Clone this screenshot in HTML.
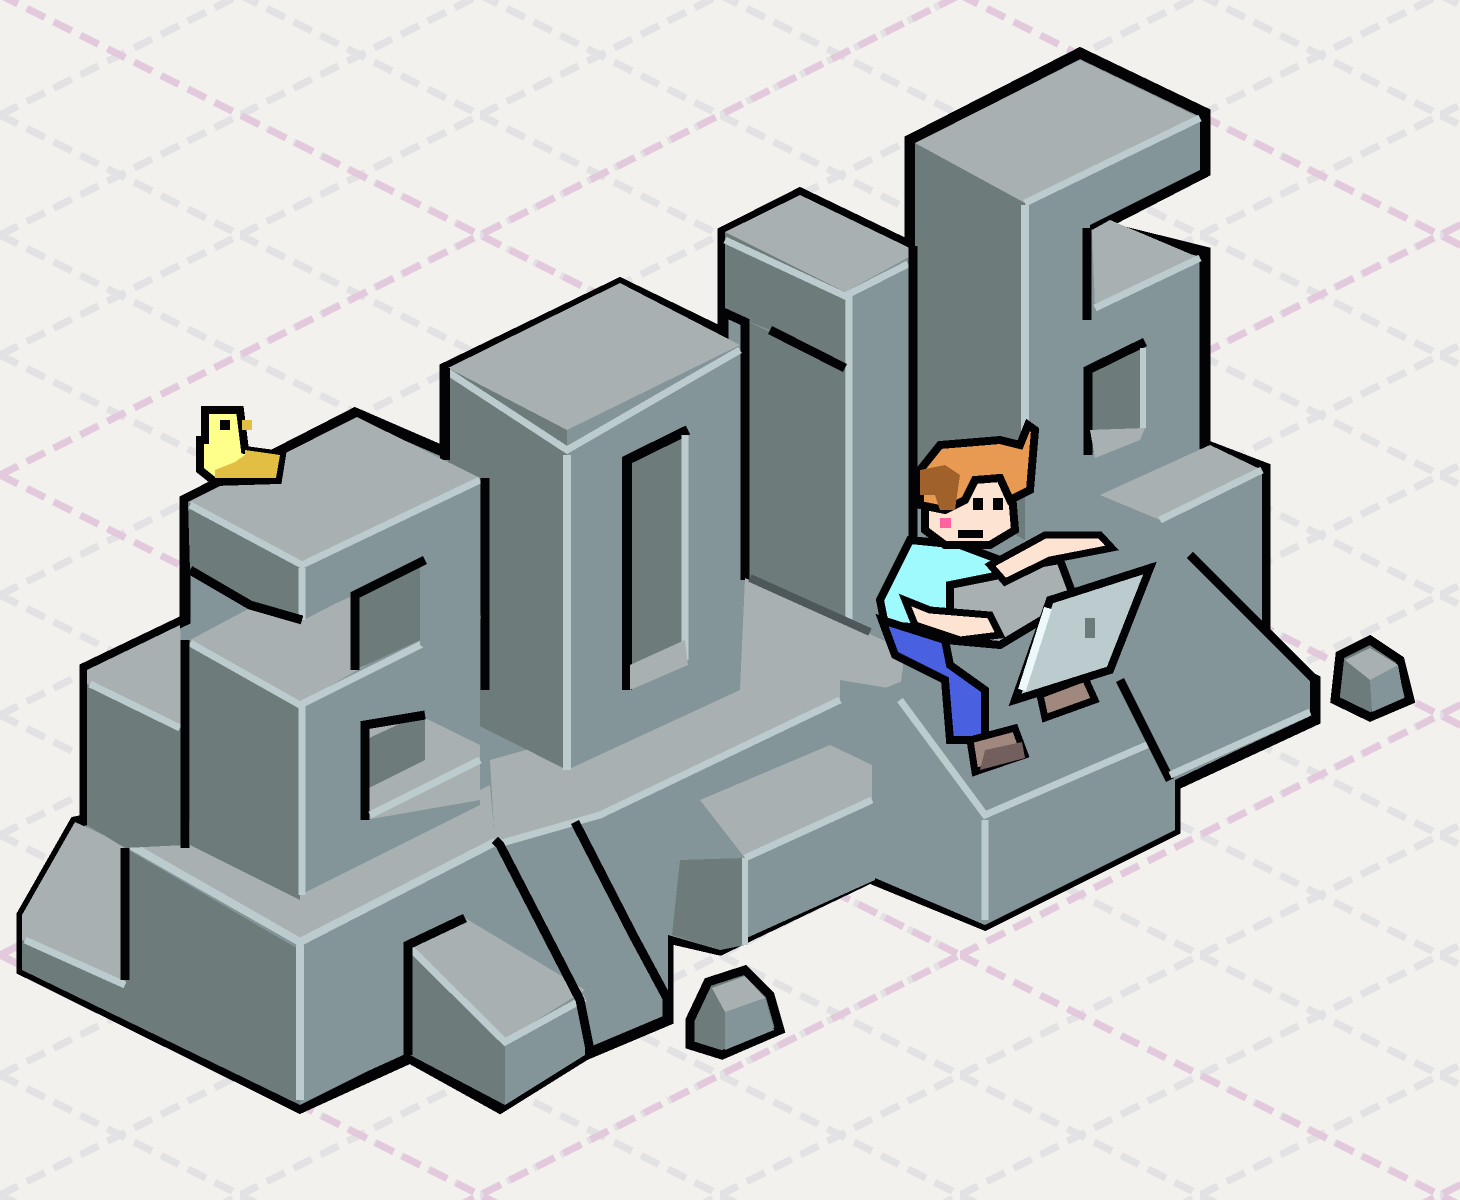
<!DOCTYPE html>
<html><head><meta charset="utf-8"><style>
html,body{margin:0;padding:0;background:#f2f1ed;}
svg{display:block;}
</style></head><body>
<svg width="1460" height="1200" viewBox="0 0 1460 1200" xmlns="http://www.w3.org/2000/svg" shape-rendering="crispEdges">
<defs>
<pattern id="g" patternUnits="userSpaceOnUse" x="0" y="-5" width="240" height="120">
<line x1="0" y1="0" x2="240" y2="120" stroke="#e2e1e4" stroke-width="7" stroke-dasharray="20 10"/>
<line x1="0" y1="120" x2="240" y2="0" stroke="#e2e1e4" stroke-width="7" stroke-dasharray="20 10"/>
</pattern>
<pattern id="p" patternUnits="userSpaceOnUse" x="0" y="-5" width="960" height="480">
<line x1="0" y1="0" x2="960" y2="480" stroke="#e3c9dc" stroke-width="7" stroke-dasharray="20 10"/>
<line x1="0" y1="480" x2="960" y2="0" stroke="#e3c9dc" stroke-width="7" stroke-dasharray="20 10"/>
</pattern>
</defs>
<rect width="1460" height="1200" fill="#f2f1ed"/>
<rect width="1460" height="1200" fill="url(#g)"/>
<rect width="1460" height="1200" fill="url(#p)"/>

<!-- rocks -->
<polygon points="1340,655 1370,640 1400,660 1410,700 1370,717 1335,700" fill="#6e7b7b" stroke="#030305" stroke-width="9"/>
<polygon points="1345,660 1370,648 1398,665 1370,680" fill="#a9b0b2"/>
<polygon points="1370,680 1398,665 1404,698 1372,712" fill="#84959a"/>
<polygon points="690,1020 708,982 745,970 770,995 780,1030 722,1055 690,1045" fill="#6e7b7b" stroke="#030305" stroke-width="9"/>
<polygon points="712,988 745,976 765,998 725,1012" fill="#a9b0b2"/>
<polygon points="725,1012 765,998 774,1030 725,1050" fill="#84959a"/>

<!-- silhouette -->
<polygon points="22,970 22,915 75,822 85,820 85,668 185,620 185,500 355,413 445,452 445,368 620,283 723,333 723,232 800,193 910,246 910,140 1080,53 1205,113 1205,172 1100,226 1205,252 1205,445 1265,468 1265,655 1315,680 1315,720 1175,785 1175,830 985,925 870,878 720,950 668,938 668,1020 585,1055 500,1108 410,1058 300,1108" fill="#84959a" stroke="#030305" stroke-width="11" stroke-linejoin="miter"/>

<!-- 6 column -->
<polygon points="915,143 1080,60 1200,118 1025,203" fill="#a9b0b2"/>
<polygon points="915,143 1025,203 1025,540 915,480" fill="#6e7b7b"/>
<polygon points="1025,203 1200,118 1200,170 1090,225 1090,540 1025,540" fill="#84959a"/>
<polygon points="1092,230 1110,220 1200,258 1095,308" fill="#a9b0b2"/>
<polyline points="1025,203 1200,118" fill="none" stroke="#bccbce" stroke-width="7"/>
<polyline points="1095,308 1200,258" fill="none" stroke="#bccbce" stroke-width="7"/>
<line x1="1087" y1="228" x2="1087" y2="320" stroke="#030305" stroke-width="9"/>
<line x1="1025" y1="205" x2="1025" y2="450" stroke="#bccbce" stroke-width="8"/>
<polygon points="1088,370 1145,342 1145,425 1088,455" fill="#6e7b7b"/>
<polyline points="1088,455 1088,370 1145,342" fill="none" stroke="#030305" stroke-width="9"/>
<line x1="1143" y1="348" x2="1143" y2="428" stroke="#bccbce" stroke-width="6"/>
<polygon points="1090,430 1145,428 1140,440 1095,458" fill="#a9b0b2"/>

<!-- 6 right-back block -->
<polygon points="1100,495 1210,445 1262,470 1160,520" fill="#a9b0b2"/>
<polygon points="1160,520 1262,470 1262,650 1190,560 1160,575" fill="#84959a"/>
<line x1="1160" y1="520" x2="1262" y2="470" stroke="#bccbce" stroke-width="7"/>

<!-- 1 -->
<polygon points="725,232 800,195 918,252 845,292" fill="#a9b0b2"/>
<polygon points="725,232 845,292 845,368 770,330 745,320 725,310" fill="#6e7b7b"/>
<polygon points="745,320 845,368 845,620 745,575" fill="#6e7b7b"/>
<polygon points="845,292 908,262 908,610 845,640" fill="#84959a"/>
<polyline points="725,240 845,296 908,264" fill="none" stroke="#bccbce" stroke-width="7"/>
<line x1="849" y1="296" x2="849" y2="620" stroke="#bccbce" stroke-width="7"/>
<polyline points="723,312 745,322 745,580" fill="none" stroke="#030305" stroke-width="9"/>
<polyline points="770,330 845,368" fill="none" stroke="#030305" stroke-width="9"/>
<line x1="913" y1="246" x2="913" y2="620" stroke="#030305" stroke-width="9"/>

<!-- central platform -->
<polygon points="490,760 740,690 745,578 905,650 900,690 840,680 840,700 600,815 495,845" fill="#a9b0b2"/>
<polyline points="750,578 870,632" fill="none" stroke="#4e575a" stroke-width="8"/>
<polygon points="600,815 840,700 875,705 875,880 720,950 668,935 668,1000 578,822" fill="#84959a"/>
<polyline points="495,845 600,815 840,700" fill="none" stroke="#bccbce" stroke-width="7"/>
<polygon points="700,800 830,745 872,765 872,800 745,858" fill="#a9b0b2"/>
<polygon points="680,860 745,858 745,945 720,950 672,935" fill="#6e7b7b"/>
<polyline points="745,858 872,800" fill="none" stroke="#bccbce" stroke-width="7"/>
<line x1="745" y1="858" x2="745" y2="945" stroke="#bccbce" stroke-width="6"/>
<polyline points="575,822 633,935 668,1000" fill="none" stroke="#030305" stroke-width="9"/>

<!-- 0 -->
<polygon points="448,368 620,283 740,345 567,430" fill="#a9b0b2"/>
<polygon points="448,368 567,430 567,770 448,710" fill="#6e7b7b"/>
<polygon points="567,430 740,345 740,690 567,770" fill="#84959a"/>
<polyline points="448,372 567,450 740,350" fill="none" stroke="#bccbce" stroke-width="7"/>
<line x1="567" y1="455" x2="567" y2="770" stroke="#bccbce" stroke-width="8"/>
<polygon points="627,460 688,430 688,660 627,690" fill="#6e7b7b"/>
<polyline points="627,690 627,460 688,430" fill="none" stroke="#030305" stroke-width="10"/>
<line x1="685" y1="435" x2="685" y2="660" stroke="#bccbce" stroke-width="7"/>
<polygon points="630,665 685,640 688,665 630,690" fill="#a9b0b2"/>
<line x1="445" y1="368" x2="445" y2="460" stroke="#030305" stroke-width="10"/>

<!-- base block front-left -->
<polygon points="22,915 75,822 125,845 125,985 22,940" fill="#a9b0b2"/>
<polygon points="125,848 300,950 300,1105 22,970 22,940 125,985" fill="#6e7b7b"/>
<polygon points="300,950 495,845 495,1000 410,1050 300,1105" fill="#84959a"/>
<polygon points="130,842 185,818 300,878 490,785 495,840 300,940" fill="#a9b0b2"/>
<polyline points="25,940 125,985" fill="none" stroke="#bccbce" stroke-width="7"/>
<polyline points="130,845 300,942 495,842" fill="none" stroke="#bccbce" stroke-width="8"/>
<line x1="300" y1="945" x2="300" y2="1100" stroke="#bccbce" stroke-width="8"/>
<line x1="125" y1="848" x2="125" y2="980" stroke="#030305" stroke-width="9"/>
<!-- stair block front -->
<polygon points="408,945 465,918 585,990 505,1040" fill="#a9b0b2"/>
<polygon points="408,945 505,1040 505,1105 410,1055" fill="#6e7b7b"/>
<polygon points="505,1040 585,995 585,1055 505,1105" fill="#84959a"/>
<polyline points="410,948 505,1042 585,998" fill="none" stroke="#bccbce" stroke-width="7"/>
<polyline points="408,1055 408,945 465,918" fill="none" stroke="#030305" stroke-width="9"/>
<polyline points="495,840 500,845 580,1000 590,1050" fill="none" stroke="#030305" stroke-width="9"/>

<!-- 2 far left box -->
<polygon points="87,670 180,625 185,730 87,684" fill="#a9b0b2"/>
<polygon points="87,684 185,730 185,845 125,848 87,825" fill="#6e7b7b"/>
<polyline points="90,684 180,728" fill="none" stroke="#bccbce" stroke-width="7"/>

<!-- 2 middle box -->
<polygon points="190,640 250,608 300,622 415,562 480,600 300,703" fill="#a9b0b2"/>
<polygon points="190,640 300,703 300,900 190,845" fill="#6e7b7b"/>
<polygon points="300,703 480,612 480,805 300,895" fill="#84959a"/>
<polyline points="190,643 300,705 480,615" fill="none" stroke="#bccbce" stroke-width="7"/>
<line x1="302" y1="705" x2="302" y2="895" stroke="#bccbce" stroke-width="7"/>
<line x1="185" y1="640" x2="185" y2="848" stroke="#030305" stroke-width="9"/>
<!-- lower notch -->
<polygon points="365,725 425,718 480,745 480,800 365,820" fill="#a9b0b2"/>
<polygon points="365,740 425,712 425,760 365,790" fill="#6e7b7b"/>
<polyline points="365,820 365,725 425,715" fill="none" stroke="#030305" stroke-width="9"/>
<polyline points="370,815 480,760" fill="none" stroke="#bccbce" stroke-width="7"/>

<!-- 2 upper block -->
<polygon points="188,502 357,417 480,478 302,563" fill="#a9b0b2"/>
<polygon points="188,502 302,563 302,618 250,605 190,570" fill="#6e7b7b"/>
<polygon points="302,563 480,478 480,690 420,645 420,565 355,595 302,618" fill="#84959a"/>
<polygon points="355,595 420,565 420,640 355,670" fill="#6e7b7b"/>
<polyline points="355,670 355,595 425,560" fill="none" stroke="#030305" stroke-width="9"/>
<polyline points="190,505 302,565 480,480" fill="none" stroke="#bccbce" stroke-width="7"/>
<line x1="302" y1="568" x2="302" y2="620" stroke="#bccbce" stroke-width="7"/>
<polyline points="190,570 250,605 302,620" fill="none" stroke="#030305" stroke-width="9"/>
<line x1="485" y1="478" x2="485" y2="690" stroke="#030305" stroke-width="9"/>

<!-- right lower block (under boy) -->
<polygon points="870,690 985,820 1175,730 1175,830 985,925 875,878" fill="#84959a"/>
<polygon points="880,690 930,670 985,810 985,920 875,875" fill="#84959a"/>
<polyline points="900,700 985,815 1170,735" fill="none" stroke="#bccbce" stroke-width="7"/>
<line x1="985" y1="820" x2="985" y2="920" stroke="#bccbce" stroke-width="7"/>
<!-- wedge right -->
<polygon points="1120,580 1190,555 1310,680 1310,715 1175,780 1160,775" fill="#84959a"/>
<polyline points="1190,555 1315,680" fill="none" stroke="#030305" stroke-width="9"/>
<polyline points="1120,680 1170,780" fill="none" stroke="#030305" stroke-width="9"/>
<polyline points="1170,775 1310,712" fill="none" stroke="#bccbce" stroke-width="7"/>

<!-- duck -->
<g stroke="#030305" stroke-width="8" shape-rendering="crispEdges">
<polygon points="205,410 240,410 245,450 282,455 278,480 215,482 200,470 200,440 205,440" fill="#fefe8a"/>
</g>
<polygon points="245,450 280,455 276,478 215,478 215,470 235,462 245,455" fill="#e2bf42"/>
<rect x="242" y="420" width="10" height="10" fill="#e2bf42"/>
<rect x="220" y="420" width="10" height="10" fill="#030305"/>

<!-- boy -->
<g shape-rendering="crispEdges">
<!-- laptop base -->
<polygon points="945,580 1060,560 1075,600 1000,645 945,640" fill="#a9b0b2" stroke="#030305" stroke-width="8"/>
<!-- shirt -->
<polygon points="910,540 960,545 1000,560 1000,575 950,585 950,630 885,625 880,600" fill="#9ffafe" stroke="#030305" stroke-width="8"/>
<!-- arm -->
<polygon points="990,565 1045,535 1100,535 1112,548 1050,560 1005,582" fill="#fce3d2" stroke="#030305" stroke-width="7"/>
<!-- lower arm/hands on lap -->
<polygon points="905,600 930,610 990,615 1000,635 960,640 915,625" fill="#fce3d2" stroke="#030305" stroke-width="7"/>
<!-- jeans -->
<polygon points="882,620 945,640 950,665 985,690 985,740 950,740 945,680 895,655" fill="#4960e0" stroke="#030305" stroke-width="8"/>
<!-- shoes -->
<polygon points="970,740 1015,728 1025,755 975,772" fill="#a0887f" stroke="#030305" stroke-width="7"/>
<polygon points="985,750 1022,742 1025,758 980,770" fill="#725f5e"/>
<polygon points="1040,695 1085,678 1095,700 1045,718" fill="#a0887f" stroke="#030305" stroke-width="7"/>
<!-- laptop screen -->
<polygon points="1050,600 1150,568 1110,670 1015,700" fill="#bccbce" stroke="#030305" stroke-width="8"/>
<line x1="1048" y1="608" x2="1022" y2="690" stroke="#edf8fb" stroke-width="8"/>
<rect x="1085" y="618" width="10" height="20" fill="#6e7b7b"/>
<!-- face -->
<polygon points="925,480 1010,470 1015,530 990,545 945,545 925,530" fill="#fce3d2" stroke="#030305" stroke-width="8"/>
<!-- hair -->
<polygon points="920,470 940,445 1000,440 1020,445 1028,425 1035,430 1030,490 1010,500 1000,478 975,480 965,500 945,510 920,505" fill="#e99a52" stroke="#030305" stroke-width="8"/>
<polygon points="920,470 945,465 960,475 955,510 940,510 935,495 920,495" fill="#a0612a"/>
<rect x="973" y="498" width="10" height="12" fill="#030305"/>
<rect x="993" y="498" width="10" height="12" fill="#030305"/>
<rect x="940" y="518" width="11" height="10" fill="#fe62a0"/>
<rect x="958" y="530" width="25" height="8" fill="#030305"/>
</g>
</svg>
</body></html>
